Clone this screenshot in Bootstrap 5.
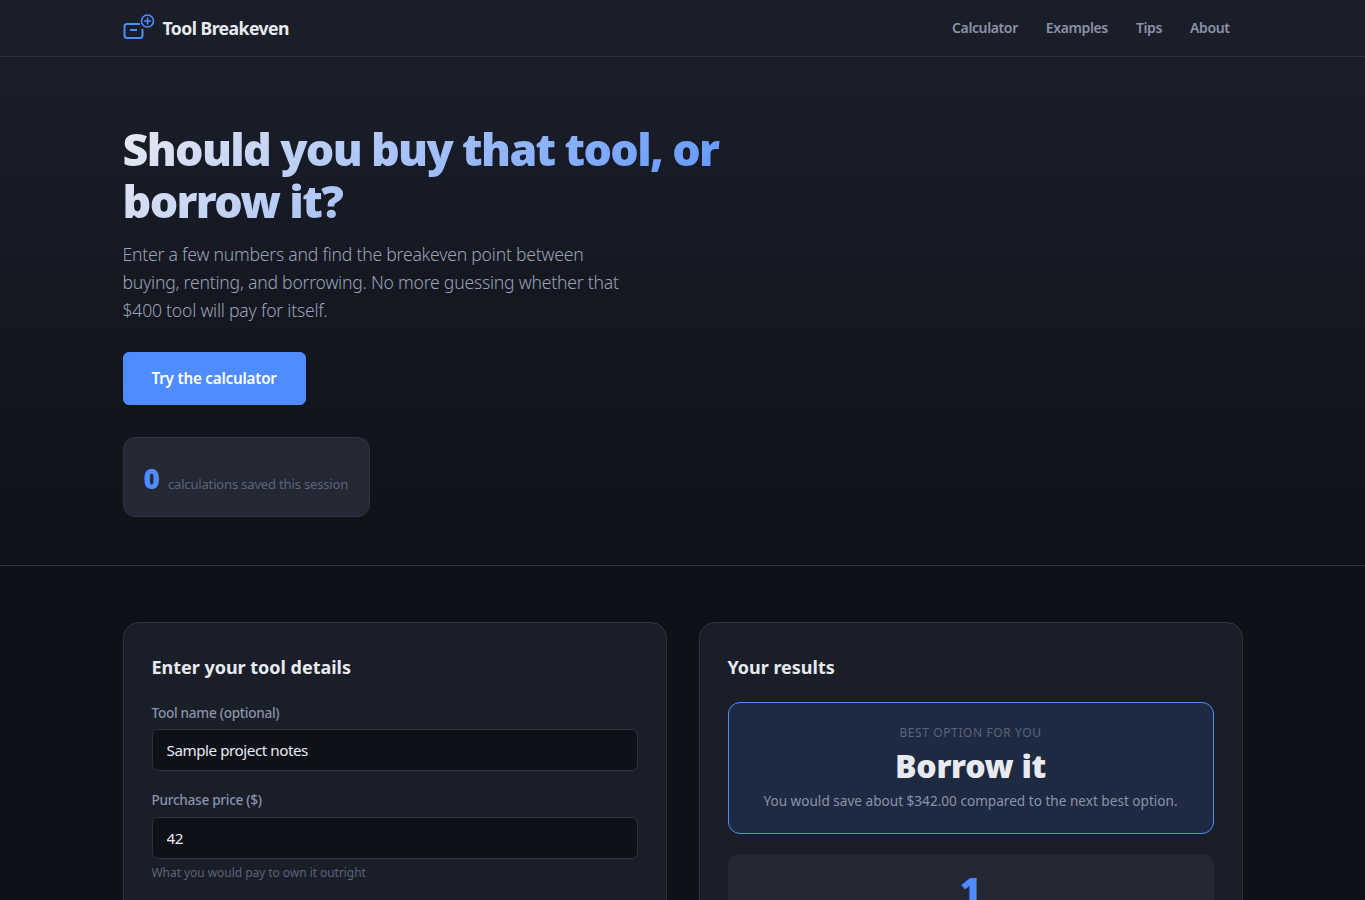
<!DOCTYPE html>
<html lang="en">

<head>
  <meta charset="UTF-8" />
  <meta name="viewport" content="width=device-width, initial-scale=1.0" />
  <title>Tool Breakeven</title>

  <link href="https://cdn.jsdelivr.net/npm/bootstrap@5.3.0/dist/css/bootstrap.min.css" rel="stylesheet" />

  <style>
    body {
      background: #0f1118;
      color: #e8eaf0;
      font-family: "Noto Sans", "Open Sans", sans-serif;
      font-size: 16px;
    }

    .wrap {
      width: 1120px;
      max-width: 1120px;
      padding: 0;
    }

    .top-bar {
      background: #1a1e29;
      border-bottom: 1px solid #2e3340;
      height: 57px;
      padding: 0;
    }

    .brand {
      color: #e8eaf0;
      font-size: 17.6px;
      font-weight: 700;
      letter-spacing: -0.55px;
      padding: 0;
      margin: 0;
    }

    .brand:hover {
      color: #e8eaf0;
    }

    .top-bar .nav-link {
      color: #8b92a8;
      font-size: 14px;
      font-weight: 600;
      letter-spacing: -0.38px;
      padding: 5px 12px 7px;
      margin-left: 4px;
    }

    .top-bar .nav {
      margin-right: 1px;
    }

    .hero {
      background: linear-gradient(180deg, #1a1e29 0%, #0f1118 100%);
      border-bottom: 1px solid #2e3340;
      padding: 66px 0 48px;
    }

    .hero h1 {
      background: linear-gradient(135deg, #e8eaf0 0%, #4f8cff 100%);
      -webkit-background-clip: text;
      background-clip: text;
      color: transparent;
      font-size: 44.8px;
      font-weight: 900;
      letter-spacing: -1.67px;
      line-height: 52px;
      margin-bottom: 13px;
      max-width: 640px;
    }

    .hero .lead {
      color: #9aa1b6;
      font-size: 17.6px;
      font-weight: 300;
      letter-spacing: -0.23px;
      line-height: 28px;
      margin-bottom: 28px;
      max-width: 520px;
    }

    .btn-try {
      --bs-btn-bg: #4f8cff;
      --bs-btn-border-color: #4f8cff;
      --bs-btn-hover-bg: #4f8cff;
      --bs-btn-hover-border-color: #4f8cff;
      --bs-btn-color: #fff;
      --bs-btn-hover-color: #fff;
      border-radius: 6px;
      font-size: 15.2px;
      font-weight: 600;
      letter-spacing: -0.2px;
      padding: 13px 28px;
      line-height: 25px;
    }

    .saved-box {
      background: #242834;
      border: 1px solid #2e3340;
      border-radius: 12px;
      margin-top: 32px;
      padding: 20px;
      height: 80px;
      width: 247px;
    }

    .saved-box b {
      color: #4f8cff;
      font-size: 28px;
      font-weight: 900;
      line-height: 38px;
      margin-top: 2px;
    }

    .saved-box span {
      color: #5c6378;
      font-size: 13px;
      letter-spacing: -0.16px;
      margin-left: 6px;
      padding-top: 16px;
    }

    .main-row {
      --bs-gutter-x: 32px;
      margin-top: 56px;
    }

    .panel {
      --bs-card-bg: #1a1e29;
      --bs-card-border-color: #2e3340;
      --bs-card-border-radius: 16px;
      --bs-card-spacer-x: 28px;
      --bs-card-spacer-y: 28px;
      --bs-card-color: #e8eaf0;
      min-height: 520px;
    }

    .panel h2 {
      font-size: 18px;
      font-weight: 700;
      letter-spacing: -0.02px;
      line-height: 32px;
      margin-bottom: 19px;
      color: #e8eaf0;
    }

    .panel .form-label {
      color: #8b92a8;
      font-size: 13.6px;
      font-weight: 500;
      letter-spacing: -0.28px;
      margin-bottom: 5px;
      line-height: 22px;
    }

    .panel .form-control {
      background: #0f1118;
      border: 1px solid #2e3340;
      border-radius: 6px;
      color: #e8eaf0;
      font-size: 15.2px;
      letter-spacing: -0.45px;
      height: 42px;
      padding: 8px 14px;
    }

    .field {
      margin-bottom: 18px;
    }

    .field-hint .form-label {
      margin-bottom: 6px;
    }

    .panel .form-text {
      color: #5c6378;
      font-size: 12px;
      letter-spacing: -0.05px;
      margin-top: 5px;
    }

    .best-box {
      background: #1e2a42;
      border: 1px solid #4f8cff;
      border-radius: 12px;
      margin-bottom: 20px;
      padding: 20px;
      height: 132px;
    }

    .best-label {
      color: #5c6378;
      font-size: 12px;
      letter-spacing: 0.6px;
      text-transform: uppercase;
      line-height: 20px;
    }

    .best-value {
      color: #e8eaf0;
      font-size: 32px;
      font-weight: 900;
      letter-spacing: -0.3px;
      line-height: 42px;
      margin: 2px 0 2px;
    }

    .best-note {
      color: #8b92a8;
      font-size: 13.6px;
      line-height: 24px;
    }

    .stat-box {
      background: #242834;
      border-radius: 12px;
      padding: 14px 20px 20px;
      min-height: 120px;
    }

    .stat-box b {
      color: #4f8cff;
      font-size: 36px;
      font-weight: 900;
      line-height: 44px;
    }
  </style>
</head>

<body>
  <nav class="navbar top-bar">
    <div class="container wrap d-flex justify-content-between align-items-center">
      <a class="navbar-brand brand d-flex align-items-center gap-2" href="#">
        <svg width="32" height="28" viewBox="0 0 32 28" fill="none" stroke="#4f8cff" stroke-width="2">
          <path d="M17 10H4a2.500 2.500 0 0 0-2.500 2.500v9A2.500 2.500 0 0 0 4 24h13a2.500 2.500 0 0 0 2.500-2.500V15" />
          <path d="M7 16h7" />
          <circle cx="24.500" cy="7" r="6" stroke-width="1.600" />
          <path d="M24.500 3.500v7M21 7h7" stroke-width="1.600" />
        </svg>
        Tool Breakeven
      </a>
      <ul class="nav">
        <li class="nav-item"><a class="nav-link" href="#">Calculator</a></li>
        <li class="nav-item"><a class="nav-link" href="#">Examples</a></li>
        <li class="nav-item"><a class="nav-link" href="#">Tips</a></li>
        <li class="nav-item"><a class="nav-link" href="#">About</a></li>
      </ul>
    </div>
  </nav>

  <header class="hero">
    <div class="container wrap">
      <h1>Should you buy that tool, or borrow it?</h1>
      <p class="lead">Enter a few numbers and find the breakeven point between buying, renting, and borrowing. No more guessing whether that $400 tool will pay for itself.</p>
      <a class="btn btn-try" href="#">Try the calculator</a>
      <div class="saved-box d-flex align-items-center">
        <b>0</b>
        <span class="ms-2">calculations saved this session</span>
      </div>
    </div>
  </header>

  <main class="container wrap">
    <div class="row main-row">
      <div class="col-6">
        <div class="card panel">
          <div class="card-body">
            <h2>Enter your tool details</h2>
            <div class="field">
              <label class="form-label d-block">Tool name (optional)</label>
              <input class="form-control" type="text" value="Sample project notes" />
            </div>
            <div class="field field-hint">
              <label class="form-label d-block">Purchase price ($)</label>
              <input class="form-control" type="text" value="42" />
              <div class="form-text">What you would pay to own it outright</div>
            </div>
          </div>
        </div>
      </div>
      <div class="col-6">
        <div class="card panel">
          <div class="card-body">
            <h2>Your results</h2>
            <div class="best-box text-center">
              <div class="best-label">Best option for you</div>
              <div class="best-value">Borrow it</div>
              <div class="best-note">You would save about $342.00 compared to the next best option.</div>
            </div>
            <div class="stat-box text-center">
              <b>1</b>
            </div>
          </div>
        </div>
      </div>
    </div>
  </main>

  <script src="https://cdn.jsdelivr.net/npm/bootstrap@5.3.0/dist/js/bootstrap.bundle.min.js"></script>
</body>

</html>
